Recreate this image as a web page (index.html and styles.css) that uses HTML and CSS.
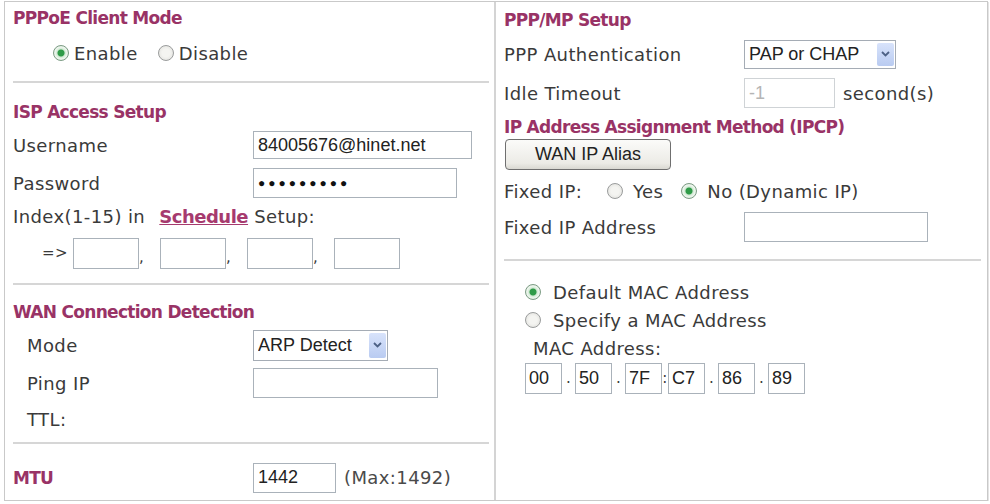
FILE: index.html
```html
<!DOCTYPE html>
<html>
<head>
    <meta charset="utf-8">
    <title>PPPoE Setup</title>
    <link rel="stylesheet" href="styles.css">
</head>
<body>
    <div class="panel">
        <div class="col colLeft">
            <div class="title tFirst">PPPoE Client Mode</div>
            <div class="row rowMode">
                <label class="opt tight"><input type="radio" name="pppoe" checked="checked" />Enable</label>
                <label class="opt tight"><input type="radio" name="pppoe" />Disable</label>
            </div>
            <div class="sep sepA"></div>

            <div class="title tIsp">ISP Access Setup</div>
            <div class="row rowUser">
                <span class="lbl">Username</span>
                <input type="text" class="textBox wUser" value="84005676@hinet.net" />
            </div>
            <div class="row rowPass">
                <span class="lbl">Password</span>
                <input type="text" class="textBox wPass dots" value="●●●●●●●●●" />
            </div>
            <div class="row rowIndex">
                <span>Index(1-15) in <a href="#" class="link">Schedule</a> Setup:</span>
            </div>
            <div class="row rowSched">
                <span class="arrow">=&gt;</span>
                <input type="text" class="textBox wIdx" /><span class="comma">,</span>
                <input type="text" class="textBox wIdx" /><span class="comma">,</span>
                <input type="text" class="textBox wIdx" /><span class="comma">,</span>
                <input type="text" class="textBox wIdx" />
            </div>
            <div class="sep sepB"></div>

            <div class="title tWan">WAN Connection Detection</div>
            <div class="row rowDetect indent">
                <span class="lbl">Mode</span>
                <span class="selWrap wArp">
                    <select class="selBox"><option>ARP Detect</option></select>
                    <span class="selArrow"><svg width="9" height="6" viewBox="0 0 9 6"><path d="M1 1 L4.5 4.5 L8 1" fill="none" stroke="#4d6185" stroke-width="1.8"/></svg></span>
                </span>
            </div>
            <div class="row rowPing indent">
                <span class="lbl">Ping IP</span>
                <input type="text" class="textBox wPing" />
            </div>
            <div class="row rowTtl indent">
                <span class="lbl">TTL:</span>
            </div>
            <div class="sep sepC"></div>

            <div class="row rowMtu">
                <span class="lbl title">MTU</span>
                <input type="text" class="textBox wMtu" value="1442" />
                <span class="hint">(Max:1492)</span>
            </div>
        </div>

        <div class="col colRight">
            <div class="title tPpp">PPP/MP Setup</div>
            <div class="row rowAuth">
                <span class="lbl">PPP Authentication</span>
                <span class="selWrap wAuth">
                    <select class="selBox"><option>PAP or CHAP</option></select>
                    <span class="selArrow"><svg width="9" height="6" viewBox="0 0 9 6"><path d="M1 1 L4.5 4.5 L8 1" fill="none" stroke="#4d6185" stroke-width="1.8"/></svg></span>
                </span>
            </div>
            <div class="row rowIdle">
                <span class="lbl">Idle Timeout</span>
                <input type="text" class="textBox wIdle" value="-1" disabled="disabled" />
                <span class="unit">second(s)</span>
            </div>
            <div class="title tIpcp">IP Address Assignment Method (IPCP)</div>
            <div class="row rowBtn">
                <input type="button" class="aliasButton" value="WAN IP Alias" />
            </div>
            <div class="row rowFixed">
                <span class="fixedLbl">Fixed IP:</span>
                <label class="opt wide"><input type="radio" name="fixed" />Yes</label>
                <label class="opt wide"><input type="radio" name="fixed" checked="checked" />No (Dynamic IP)</label>
            </div>
            <div class="row rowFixedAddr">
                <span class="lbl">Fixed IP Address</span>
                <input type="text" class="textBox wFixed" />
            </div>
            <div class="sep sepD"></div>

            <div class="row rowMac">
                <label class="opt macOpt"><input type="radio" name="mac" checked="checked" />Default MAC Address</label>
            </div>
            <div class="row rowMac">
                <label class="opt macOpt"><input type="radio" name="mac" />Specify a MAC Address</label>
            </div>
            <div class="row rowMac macLbl">MAC Address:</div>
            <div class="row rowMacBoxes">
                <input type="text" class="textBox wMac" value="00" /><span class="dot">.</span>
                <input type="text" class="textBox wMac" value="50" /><span class="dot">.</span>
                <input type="text" class="textBox wMac" value="7F" /><span class="dot colon">:</span>
                <input type="text" class="textBox wMac" value="C7" /><span class="dot">.</span>
                <input type="text" class="textBox wMac" value="86" /><span class="dot">.</span>
                <input type="text" class="textBox wMac" value="89" />
            </div>
        </div>
    </div>
</body>
</html>
```

FILE: styles.css
```css
body
{
    margin: 1px 0 0 4px;
    font-family: "DejaVu Sans", Verdana, sans-serif;
    font-size: 18px;
    letter-spacing: 0.4px;
    color: #3a3a3a;
    background: #fff;
}
.panel
{
    display: flex;
    width: 984px;
    height: 500px;
    box-sizing: border-box;
    border: 1px solid #c9c9c9;
    box-shadow: 1px 1px 0 #e4e4e4;
}
.col
{
    box-sizing: border-box;
    width: 491px;
}
.colLeft
{
    border-right: 2px solid #d4d4d4;
    padding-left: 8px;
}
.colRight
{
    padding-left: 8px;
}
.title
{
    font-size: 17px;
    font-weight: bold;
    letter-spacing: -0.7px;
    color: #993366;
}
.row
{
    display: flex;
    align-items: center;
    white-space: nowrap;
}
.lbl
{
    width: 240px;
    flex: none;
}
.indent
{
    padding-left: 14px;
}
.indent .lbl
{
    width: 226px;
}
.sep
{
    border-top: 2px solid #d6d6d6;
    margin-right: 5px;
}

/* left column heights */
.tFirst { height: 32px; line-height: 32px; }
.rowMode { height: 38px; padding-left: 40px; }
.sepA { margin-top: 9px; height: 9px; }
.tIsp { height: 28px; padding-top: 6px; line-height: 28px; }
.rowUser { height: 38px; }
.rowPass { height: 38px; }
.rowIndex { height: 28px; }
.rowSched { height: 46px; padding-left: 29px; }
.sepB { margin-top: 7px; height: 7px; }
.tWan { height: 32px; padding-top: 4px; line-height: 32px; }
.rowDetect { height: 34px; }
.rowPing { height: 42px; }
.rowTtl { height: 30px; }
.sepC { margin-top: 8px; height: 8px; }
.rowMtu { height: 43px; padding-top: 4px; }

/* right column heights */
.tPpp { height: 36px; line-height: 36px; }
.rowAuth { height: 32px; }
.rowIdle { height: 46px; }
.tIpcp { height: 22px; line-height: 22px; }
.rowBtn { height: 32px; }
.rowFixed { height: 42px; }
.rowFixedAddr { height: 30px; }
.sepD { margin-top: 17px; height: 17px; margin-right: 6px; }
.rowMac { height: 28px; }
.rowMacBoxes { height: 32px; padding-left: 21px; }

.textBox
{
    box-sizing: border-box;
    height: 30px;
    border: 1px solid #aab2ba;
    padding: 0 4px;
    font-family: "Liberation Sans", Arial, sans-serif;
    font-size: 18px;
    letter-spacing: 0;
    color: #222;
    background: #fff;
}
.textBox:disabled
{
    border-color: #cfd3d6;
    color: #b5b5b5;
    background: #fff;
}
.dots
{
    font-size: 12px;
    letter-spacing: 3px;
    color: #111;
}
.wUser { width: 219px; height: 28px; }
.wPass { width: 204px; }
.wIdx { width: 66px; height: 31px; }
.wPing { width: 185px; }
.wMtu { width: 83px; }
.wIdle { width: 91px; }
.wFixed { width: 184px; }
.wMac { width: 37px; height: 31px; padding: 0 3px; }

.arrow
{
    width: 31px;
    font-size: 15px;
}
.comma
{
    width: 21px;
    align-self: flex-end;
    margin-bottom: 10px;
    font-size: 15px;
}
.link
{
    margin-left: 8px;
    color: #a63a6e;
    font-weight: bold;
    letter-spacing: -0.5px;
}
.hint
{
    padding-left: 8px;
    color: #4a4a4a;
}
.unit
{
    padding-left: 8px;
}

/* fake windows style dropdown */
.selWrap
{
    position: relative;
    display: inline-block;
}
.selBox
{
    -webkit-appearance: none;
    appearance: none;
    box-sizing: border-box;
    width: 100%;
    border: 1px solid #a5acb5;
    border-radius: 0;
    background: #fff;
    padding: 0 4px;
    font-family: "Liberation Sans", Arial, sans-serif;
    font-size: 18px;
    color: #222;
}
.wArp { width: 135px; }
.wArp .selBox { height: 31px; }
.wAuth { width: 152px; }
.wAuth .selBox { height: 29px; }
.selArrow
{
    position: absolute;
    top: 3px;
    bottom: 3px;
    right: 2px;
    width: 17px;
    border-radius: 2px;
    background: linear-gradient(#d8e3fb, #b9cbf1);
    display: flex;
    align-items: center;
    justify-content: center;
}

.aliasButton
{
    width: 166px;
    height: 31px;
    margin-left: 1px;
    border: 1px solid #6f6f6f;
    border-radius: 4px;
    background: linear-gradient(#fbfbf9, #ecebe6 80%, #d9d8d2);
    font-family: "Liberation Sans", Arial, sans-serif;
    font-size: 18px;
    color: #222;
}

/* radio buttons */
.opt
{
    display: flex;
    align-items: center;
}
.opt input
{
    -webkit-appearance: none;
    appearance: none;
    box-sizing: border-box;
    width: 16px;
    height: 16px;
    margin: 0;
    border: 1px solid #9a9c9c;
    border-radius: 50%;
    background: radial-gradient(circle, #f4f4f1 40%, #dcdcd8 100%);
}
.opt input:checked
{
    border-color: #7c9c84;
    background: radial-gradient(circle, #2f9b48 0, #2f9b48 3px, #cfe9d2 4px, #eef6ee 6px, #d9e3da 8px);
}
.tight input
{
    margin-right: 5px;
}
.tight + .tight
{
    margin-left: 20px;
}
.fixedLbl
{
    width: 103px;
}
.wide input
{
    margin-right: 10px;
}
.wide + .wide
{
    margin-left: 18px;
}
.macOpt
{
    padding-left: 21px;
}
.macOpt input
{
    margin-right: 12px;
}
.macLbl
{
    padding-left: 29px;
}
.dot
{
    width: 13px;
    text-align: center;
    font-size: 15px;
}
.colon
{
    width: 6px;
}
```
